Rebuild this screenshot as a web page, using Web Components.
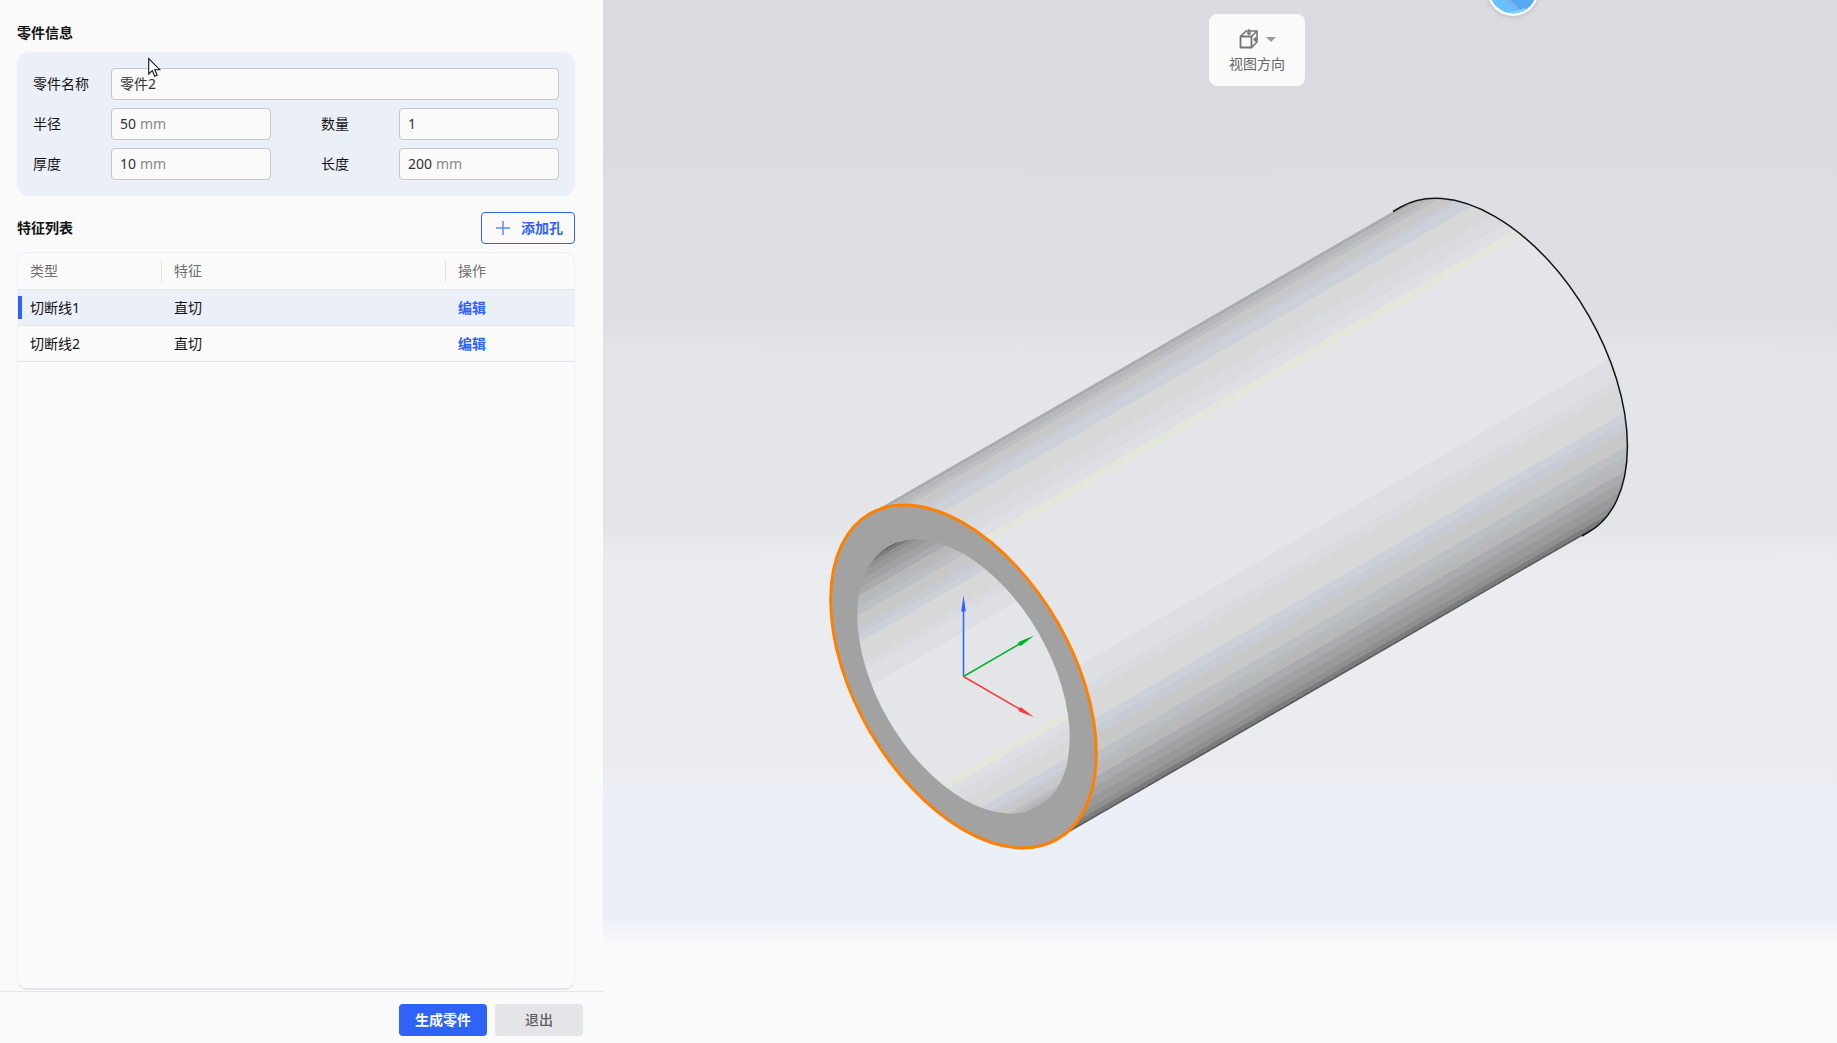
<!DOCTYPE html>
<html lang="zh-CN">
<head>
<meta charset="utf-8">
<title>零件</title>
<style>
html, body { height: 100%; margin: 0; }
body {
  font: 14px/20px "Noto Sans", "Noto Sans CJK SC", sans-serif;
  color: #141414;
  background: #fafafa;
  --blue: #2f63f7;
  --tint: #ebeff8;
  --line: #e4e5e9;
}
</style>
</head>
<body>
<part-designer></part-designer>
<script>
const define = (name, html, setup) => {
  const template = document.createElement('template');
  template.innerHTML = html;
  customElements.define(name, class extends HTMLElement {
    constructor() {
      super();
      this.attachShadow({ mode: 'open' }).append(template.content.cloneNode(true));
    }
    connectedCallback() { if (setup) setup(this, this.shadowRoot); }
  });
};

/* Labelled text box with an optional unit after the value */
define('part-field', `
<style>
  :host { display: flex; align-items: center; flex: 1; min-width: 0; }
  label.name { flex: none; width: 78px; }
  .box {
    box-sizing: border-box; flex: 1; min-width: 0; height: 32px; padding: 0 8px;
    display: flex; align-items: center; gap: 4px;
    background: #fafafa; border: 1px solid #c5c8d0; border-radius: 4px; cursor: text;
  }
  input {
    flex: 1; min-width: 0; box-sizing: content-box; padding: 0; border: 0; outline: 0;
    background: none; font: inherit; color: #333; height: 20px;
  }
  .unit { color: #8a8a8a; }
  .unit[hidden] { display: none; }
</style>
<label class="name" for="value"></label>
<label class="box" for="value"><input id="value" type="text"><span class="unit"></span></label>
`, (host, root) => {
  root.querySelector('.name').textContent = host.getAttribute('label');
  const input = root.querySelector('input');
  input.value = host.getAttribute('value');
  const unit = host.getAttribute('unit');
  const span = root.querySelector('.unit');
  span.hidden = !unit;
  if (unit) {
    span.textContent = unit;
    input.style.flex = 'none';
    const fit = () => { input.style.width = input.value.length + 'ch'; };
    input.addEventListener('input', fit);
    fit();
  }
});

define('action-button', `
<style>
  :host { display: block; }
  button {
    box-sizing: border-box; height: 32px; min-width: 88px; padding: 0 11px 0 13px;
    display: flex; align-items: center; justify-content: center; gap: 10px;
    font: inherit; font-weight: 700; border: 1px solid transparent; border-radius: 4px;
    color: #5f5f5f; background: #e4e5e9; cursor: pointer;
  }
  :host([kind=primary]) button { color: #fafafa; background: var(--blue); padding: 0 12px; }
  :host([kind=outline]) button { color: var(--blue); background: #fafafa; border-color: var(--blue); }
  :host([kind=plain]) button { font-weight: 500; padding: 0 12px; }
</style>
<button type="button"><slot name="icon"></slot><slot></slot></button>
`);

define('feature-table', `
<style>
  :host {
    display: block; flex: 1; min-height: 0; box-sizing: border-box; overflow: hidden;
    border: 1px solid var(--tint); border-bottom: 2px solid var(--line); border-radius: 10px;
  }
  table { width: 100%; table-layout: fixed; border-collapse: separate; border-spacing: 0; text-align: left; }
  th, td { box-sizing: border-box; height: 36px; padding: 0 12px; border-bottom: 1px solid var(--line); }
  th { height: 37px; font-weight: 400; color: #6e6e6e; padding: 0; }
  th span { display: block; padding: 1px 12px; border-right: 1px solid var(--line); }
  th:last-child span { border: 0; }
  th:first-child { width: 144px; }
  th:last-child { width: 128px; }
  tr.selected td { background: var(--tint); }
  tr.selected td:first-child {
    background: linear-gradient(var(--blue), var(--blue)) 0 6px / 4px 23px no-repeat, var(--tint);
  }
  button { padding: 0; border: 0; background: none; font: inherit; font-weight: 700; color: var(--blue); cursor: pointer; }
</style>
<table>
  <thead><tr><th><span>类型</span></th><th><span>特征</span></th><th><span>操作</span></th></tr></thead>
  <tbody>
    <tr class="selected"><td>切断线1</td><td>直切</td><td><button type="button">编辑</button></td></tr>
    <tr><td>切断线2</td><td>直切</td><td><button type="button">编辑</button></td></tr>
  </tbody>
</table>
`);

define('part-panel', `
<style>
  :host { display: flex; flex-direction: column; flex: none; width: 603px; background: #fafafa; }
  main { flex: 1; min-height: 0; display: flex; flex-direction: column; padding: 23px 28px 0 17px; }
  h2 { margin: 0; font-size: 14px; line-height: 20px; font-weight: 700; }
  form {
    display: flex; flex-direction: column; gap: 8px; margin: 9px 0 16px; padding: 16px;
    background: var(--tint); border-radius: 12px;
  }
  .row { display: flex; gap: 50px; }
  .head { display: flex; align-items: center; justify-content: space-between; margin-bottom: 8px; }
  footer {
    display: flex; justify-content: flex-end; gap: 8px; padding: 12px 20px 7px;
    margin-top: 1px; border-top: 1px solid var(--line);
  }
  svg { display: block; }
</style>
<main>
  <h2>零件信息</h2>
  <form>
    <part-field label="零件名称" value="零件2"></part-field>
    <div class="row">
      <part-field label="半径" value="50" unit="mm"></part-field>
      <part-field label="数量" value="1"></part-field>
    </div>
    <div class="row">
      <part-field label="厚度" value="10" unit="mm"></part-field>
      <part-field label="长度" value="200" unit="mm"></part-field>
    </div>
  </form>
  <div class="head">
    <h2>特征列表</h2>
    <action-button kind="outline">
      <svg slot="icon" width="16" height="16" viewBox="0 0 16 16" fill="none" stroke="#5c88ff" stroke-width="1.5"><path d="M8 1v14M1 8h14"/></svg>
      添加孔
    </action-button>
  </div>
  <feature-table></feature-table>
</main>
<footer>
  <action-button kind="primary">生成零件</action-button>
  <action-button kind="plain">退出</action-button>
</footer>
`);

define('view-direction', `
<style>
  :host { display: block; }
  button {
    box-sizing: border-box; width: 96px; height: 72px; padding: 15px 0 12px; border: 0; border-radius: 8px;
    display: flex; flex-direction: column; align-items: center; justify-content: space-between;
    background: #fafafa; color: #666; font: inherit; cursor: pointer;
  }
  .icons { display: flex; align-items: center; gap: 8px; }
  svg { display: block; }
</style>
<button type="button">
  <span class="icons">
    <svg width="20" height="20" viewBox="0 0 20 20" fill="none" stroke="#747474" stroke-width="1.4" stroke-linejoin="round">
      <path stroke-width="1.8" d="M2.500 7.500h11v11h-11z"/>
      <path stroke-width="1.6" d="M2.500 7.500 8 2h11l-5.500 5.500M19 2v11l-5.500 5.500"/>
      <path d="M11 0v5M9 3.500l2 2 2-2M20 10.500h-4.500M18 8.500l-2 2 2 2"/>
    </svg>
    <svg width="10" height="5" viewBox="0 0 10 5"><path d="M0 0h10L5 5z" fill="#999"/></svg>
  </span>
  <span>视图方向</span>
</button>
`);

/* Shading across the tube: distance from the axis where each facet starts, and its colour */
const RADIUS = 188;
const OUTER = [
  [-188, '#aaabae'], [-185, '#b8b8b8'], [-180, '#bcc0c4'], [-176, '#c8c8c8'], [-167, '#c8cbd4'],
  [-163, '#ccd0d9'], [-153, '#d8d8d8'], [-134, '#dadbe0'], [-121, '#dedfe4'], [-111, '#e4e6dc'],
  [-103, '#e4e5e9'], [48, '#dedfe4'], [69, '#dadbe0'], [77, '#d8d8d8'], [102, '#ccd0d9'],
  [110, '#c8cbd4'], [118, '#c8c8c8'], [132, '#bcc0c4'], [140, '#b8bbbe'], [146, '#b8b8b8'],
  [153, '#aaabae'], [161, '#a2a2a2'], [169, '#999999'], [177, '#8f8f8f'], [182, '#7c7c7c'], [186, '#5c5c5c']
];
const shade = (id, scale, facets) => {
  const cx = 963.5, cy = 676.5, ux = 0.5 * RADIUS * scale, uy = 0.866 * RADIUS * scale;
  const stops = facets.map(([p, c], i) => {
    const end = i + 1 < facets.length ? facets[i + 1][0] : RADIUS;
    const at = v => (v + RADIUS) / (2 * RADIUS);
    return `<stop offset="${at(p)}" stop-color="${c}"/><stop offset="${at(end)}" stop-color="${c}"/>`;
  }).join('');
  return `<linearGradient id="${id}" gradientUnits="userSpaceOnUse" x1="${cx - ux}" y1="${cy - uy}" x2="${cx + ux}" y2="${cy + uy}">${stops}</linearGradient>`;
};

define('model-view', `
<style>
  :host {
    display: block; flex: 1; min-width: 0; position: relative; overflow: hidden;
    background: linear-gradient(#dadbe0 14%, #dedfe4 18.500%, #dedfe4 31%, #e4e5e9 34%, #e4e5e9 50.500%,
      #ebecf0 54%, #ebecf0 73.500%, #ebeff8 77%, #ebeff8 88%, #fafafa 90.500%);
  }
  .scene { display: block; width: 100%; height: 100%; }
  view-direction { position: absolute; top: 14px; left: calc(50% - 11px); }
  .globe { position: absolute; top: 0; left: calc(50% + 260px); }
</style>
<svg class="scene" viewBox="603 0 1234 1043" preserveAspectRatio="xMidYMid slice" aria-hidden="true">
  <defs>${shade('outer', 1, OUTER)}${shade('inner', -0.8, OUTER)}</defs>
  <path fill="url(#outer)" d="M869.600 513.900 1400.800 207A187 108 60 0 1 1588.600 532.200L1057.400 839.100z"/>
  <path fill="none" stroke="#151515" stroke-width="1.500" d="M1393 211.500 1400.800 207A187 108 60 0 1 1588.600 532.200L1582 536"/>
  <ellipse cx="963.500" cy="676.500" rx="187.800" ry="108.500" transform="rotate(60 963.500 676.500)" fill="#a2a2a2" stroke="#ff8000" stroke-width="3"/>
  <path fill="url(#inner)" d="M888.400 546.400A150 86.600 60 0 1 1038.600 806.600 150 86.600 60 0 1 888.400 546.400z"/>
  <g stroke-width="1.500">
    <path stroke="#2f63f7" d="M963.500 676.500V611"/><path fill="#2f63f7" d="M963.500 595.500l2.300 16h-4.600z"/>
    <path stroke="#00b42a" d="M963.500 676.500 1020 643.800"/><path fill="#00b42a" d="M1034 635.700 1021.500 645.500Q1017.500 645.500 1018 643.500 1018.500 641.500 1020 641.300z"/>
    <path stroke="#f93a3a" d="M963.500 676.500 1020 709.200"/><path fill="#f93a3a" d="M1034 717.300 1021.500 707.500Q1017.500 707 1018 709 1018.500 711 1020 711.700z"/>
  </g>
</svg>
<view-direction></view-direction>
<svg class="globe" width="66" height="24" viewBox="0 0 66 24" aria-hidden="true">
  <defs>
    <clipPath id="disc"><circle cx="33" cy="-10" r="23.500"/></clipPath>
    <filter id="soft" x="-20%" y="-20%" width="140%" height="140%"><feGaussianBlur stdDeviation="1.500"/></filter>
  </defs>
  <circle cx="33" cy="-9" r="27" fill="#b8bbc4" opacity=".7" filter="url(#soft)"/>
  <circle cx="33" cy="-10" r="26" fill="#fafafa"/>
  <g clip-path="url(#disc)">
    <path fill="#67c3ff" d="M0-40h66v64H0z"/>
    <path fill="#7ab3ee" d="M15-10 45 20 50 10 28-12z"/>
    <path fill="#55a8f2" d="M24-6 41 10 62 6V-20z"/>
    <path fill="#7ad8ff" d="M26 12Q40 11 47 7L40 14 28 16z"/>
  </g>
</svg>
`);

define('part-designer', `
<style>
  :host { display: flex; min-height: 100%; height: 100%; position: relative; }
  .pointer { position: absolute; left: 148px; top: 57px; pointer-events: none; }
</style>
<part-panel></part-panel>
<model-view></model-view>
<svg class="pointer" width="13" height="21" viewBox="0 0 13 21" aria-hidden="true">
  <path d="M.7 1.500V17l3.600-3.400 2.400 5.600 2.500-1-2.400-5.500h5z" fill="#fafafa" stroke="#141414" stroke-width="1.100"/>
</svg>
`);
</script>
</body>
</html>
